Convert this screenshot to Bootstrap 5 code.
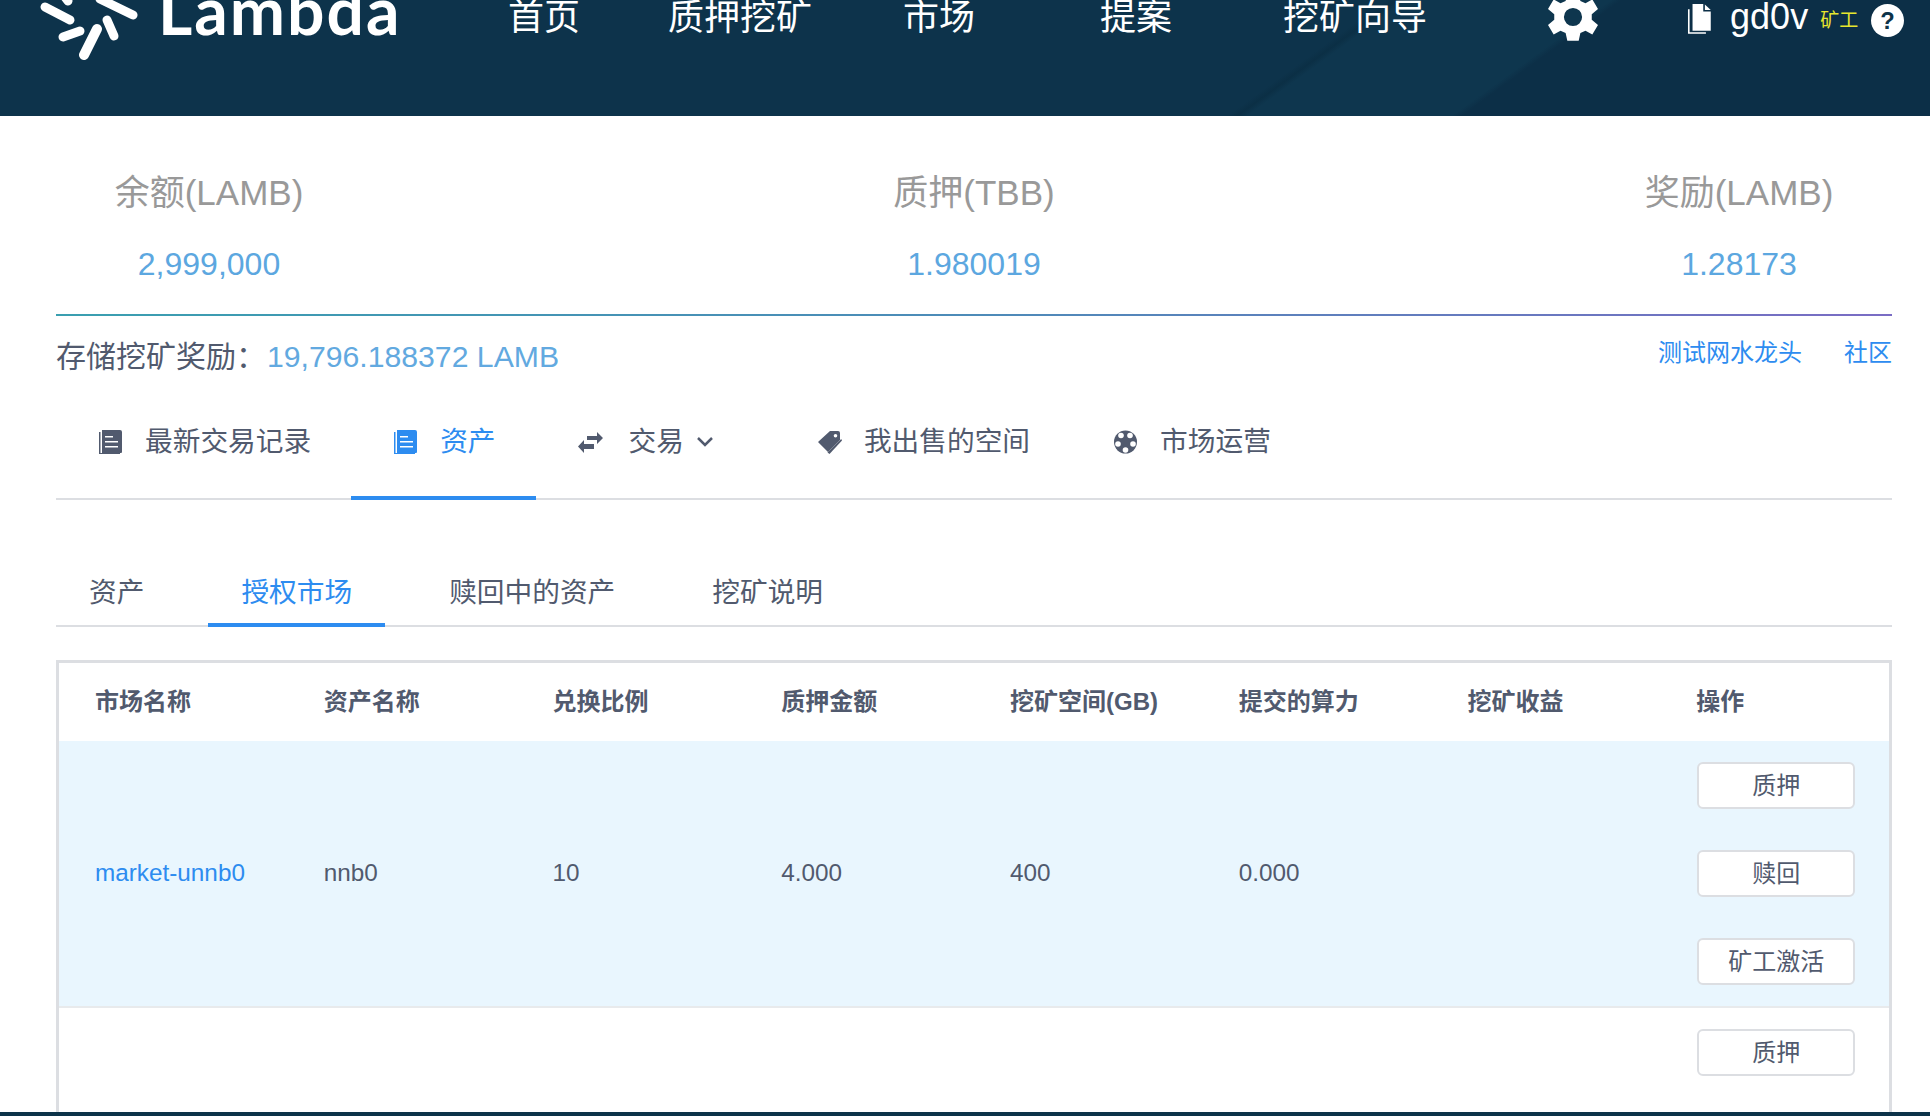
<!DOCTYPE html>
<html lang="zh-CN">

<head>
    <meta charset="UTF-8" />
    <title>Lambda</title>
    <link rel="stylesheet" href="https://cdn.jsdelivr.net/npm/bootstrap@5.3.3/dist/css/bootstrap.min.css">
    <script src="https://cdn.jsdelivr.net/npm/bootstrap@5.3.3/dist/js/bootstrap.bundle.min.js"></script>
    <style>
        html,
        body {
            height: 100%;
        }

        body {
            font-family: "Liberation Sans", "Noto Sans CJK SC", sans-serif;
            color: #515a6e;
            background-color: #fff;
            overflow: hidden;
        }

        a {
            text-decoration: none;
        }

        /* header */
        .top-head {
            flex: 0 0 116px;
            overflow: hidden;
            background-color: #0d334b;
            background-image: linear-gradient(144deg, #0d334b 0, #0d334b 815px, #0b2f45 821px, #0e364e 827px, #0e364e 947px, #0c2f47 953px);
        }

        .top-inner {
            height: 34px;
            color: #fff;
        }

        .logo-mark {
            flex: 0 0 auto;
            width: 158px;
            height: 60px;
            margin-top: 26px;
        }

        .logo-word {
            flex: 0 0 350px;
            font-family: Lato, sans-serif;
            font-weight: 700;
            font-size: 66px;
            line-height: 34px;
            letter-spacing: 2px;
            margin-top: -14px;
        }

        .main-nav {
            margin-top: 4px;
        }

        .main-nav a {
            color: #fff;
            font-size: 36px;
            line-height: 34px;
            white-space: nowrap;
        }

        .main-nav li:nth-child(2) { margin-left: 88px; }
        .main-nav li:nth-child(3) { margin-left: 91px; }
        .main-nav li:nth-child(4) { margin-left: 125px; }
        .main-nav li:nth-child(5) { margin-left: 111px; }

        .gear-icon {
            width: 50px;
            height: 48px;
            margin-left: 121px;
            flex: 0 0 auto;
        }

        .file-icon {
            width: 25px;
            height: 30px;
            margin-left: 89px;
            margin-top: 4px;
            flex: 0 0 auto;
        }

        .user-name {
            font-size: 36px;
            margin-left: 18px;
            line-height: 34px;
        }

        .user-role {
            color: #e6e62e;
            font-size: 19px;
            margin-left: 12px;
            margin-top: 8px;
            white-space: nowrap;
        }

        .help-icon {
            width: 33px;
            height: 33px;
            margin-left: 13px;
            margin-top: 7px;
            flex: 0 0 auto;
        }

        /* summary */
        .page-body {
            flex: 1 1 auto;
            min-height: 0;
            overflow: hidden;
            padding: 0 38px 0 56px;
        }

        .stat-row {
            padding: 52px 0 30px;
            border-bottom: 2px solid transparent;
            border-image: linear-gradient(90deg, #3a9fb0, #4d8bb8 50%, #7a6cc4) 1;
        }

        .stat-box {
            width: 306px;
        }

        .stat-name {
            font-size: 35px;
            line-height: 50px;
            color: #999;
        }

        .stat-num {
            font-size: 32px;
            line-height: 40px;
            margin-top: 26px;
            color: #5ca7e0;
        }

        .reward-row {
            margin-top: 16px;
            height: 50px;
        }

        .reward-text {
            font-size: 30px;
            line-height: 50px;
        }

        .reward-num {
            color: #62a9e0;
            font-size: 30.2px;
            margin-left: 1px;
        }

        .side-links {
            font-size: 24px;
            line-height: 42px;
            gap: 42px;
        }

        .side-links a {
            color: #2d8cf0;
        }

        /* main tabs */
        .main-tabs {
            margin-top: 18px;
            border-bottom: 2px solid #dcdee2;
            flex-wrap: nowrap;
        }

        .main-tabs .nav-link {
            display: flex;
            align-items: center;
            height: 100px;
            padding: 0 40px 13px 42px;
            margin-bottom: -2px;
            color: #515a6e;
            font-size: 27.7px;
            border-bottom: 4px solid transparent;
        }

        .main-tabs .nav-link.active {
            color: #2d8cf0;
            border-bottom-color: #2d8cf0;
        }

        .main-tabs .item-deal {
            margin-right: 21px;
        }

        .main-tabs .item-sale {
            margin-right: 1px;
        }

        .tab-icon {
            width: 25px;
            height: 24px;
            margin-right: 22px;
            flex: 0 0 auto;
            fill: currentColor;
        }

        .item-deal .tab-icon {
            margin-right: 26px;
        }

        .tab-caret {
            width: 18px;
            height: 11px;
            margin-left: 12px;
        }

        /* sub tabs */
        .sub-tabs {
            margin-top: 73px;
            border-bottom: 2px solid #dcdee2;
            gap: 31px;
        }

        .sub-tabs .nav-link {
            padding: 0 33px 10px;
            line-height: 40px;
            margin-bottom: -2px;
            color: #515a6e;
            font-size: 27.7px;
            border-bottom: 4px solid transparent;
        }

        .sub-tabs .nav-link.active {
            color: #2d8cf0;
            border-bottom-color: #2d8cf0;
        }

        /* table */
        .asset-wrap {
            margin-top: 33px;
            border: solid #dcdee2;
            border-width: 3px 3px 0;
        }

        .asset-table {
            table-layout: fixed;
            width: 100%;
            font-size: 24px;
            color: #515a6e;
        }

        .asset-table th {
            height: 78px;
            padding: 0 0 0 36px;
            font-weight: 700;
            background: #fff;
            white-space: nowrap;
        }

        .asset-table td {
            padding: 0 0 0 36px;
            font-size: 24.3px;
            vertical-align: middle;
            border-bottom: 2px solid #e8eaec;
        }

        .asset-table tr.row-on td {
            background-color: #e9f6fe;
        }

        .asset-table a {
            color: #2d8cf0;
        }

        .asset-table td.act-cell {
            padding: 21px 0 21px 37px;
        }

        .asset-table tr.row-tail td {
            height: 264px;
            vertical-align: top;
        }

        .act-btn {
            display: block;
            width: 158px;
            height: 47px;
            padding: 0;
            font-size: 24px;
            line-height: 43px;
            color: #515a6e;
            background: #fff;
            border: 2px solid #dcdee2;
            border-radius: 6px;
        }

        .act-btn+.act-btn {
            margin-top: 41px;
        }

        .foot-strip {
            flex: 0 0 4px;
            background-color: #0d3349;
        }
    </style>
</head>

<body>
    <div class="d-flex flex-column h-100">

        <!-- Header -->
        <header class="top-head">
            <div class="top-inner d-flex align-items-center">
                <svg class="logo-mark" viewBox="0 0 158 60" aria-hidden="true">
                    <g stroke="#fff" stroke-linecap="round" fill="none">
                        <line x1="45" y1="7" x2="70" y2="20" stroke-width="9" />
                        <line x1="58" y1="-12" x2="68" y2="1" stroke-width="9" />
                        <line x1="100" y1="-1" x2="133" y2="15" stroke-width="9" />
                        <line x1="63" y1="37" x2="80" y2="31" stroke-width="9" />
                        <line x1="84" y1="55" x2="97" y2="29" stroke-width="10" />
                        <line x1="107" y1="20" x2="114" y2="36" stroke-width="9" />
                    </g>
                </svg>
                <span class="logo-word">Lambda</span>
                <ul class="main-nav list-unstyled d-flex align-items-center mb-0">
                    <li><a href="#">首页</a></li>
                    <li><a href="#">质押挖矿</a></li>
                    <li><a href="#">市场</a></li>
                    <li><a href="#">提案</a></li>
                    <li><a href="#">挖矿向导</a></li>
                </ul>
                <svg class="gear-icon" viewBox="3 0 44 42" aria-hidden="true">
                    <path fill="#fff" fill-rule="evenodd"
                        d="M20 0h10l1.500 7 4.500 2 6-3.500 5 8.500-5.500 4.500v5l5.500 4.500-5 8.500-6-3.500-4.500 2-1.500 7h-10l-1.500-7-4.500-2-6 3.500-5-8.500 5.500-4.500v-5l-5.500-4.500 5-8.500 6 3.500 4.500-2z M25 13a8 8 0 1 0 0 16 8 8 0 1 0 0-16z" />
                </svg>
                <svg class="file-icon" viewBox="0 0 23 28" aria-hidden="true">
                    <path fill="#fff" d="M5 0h10v7h7v18H5z" />
                    <path fill="#fff" d="M16.500 0.500l5.500 5h-5.500z" />
                    <path fill="none" stroke="#fff" stroke-width="1.500" d="M1.500 5v22h16" />
                </svg>
                <span class="user-name">gd0v</span>
                <span class="user-role">矿工</span>
                <svg class="help-icon" viewBox="0 0 32 32" aria-hidden="true">
                    <circle cx="16" cy="16" r="16" fill="#fff" />
                    <text x="16" y="24" text-anchor="middle" fill="#0d3349" font-family="Liberation Sans" font-weight="700" font-size="23">?</text>
                </svg>
            </div>
        </header>

        <!-- Content -->
        <main class="page-body">
            <div class="stat-row d-flex justify-content-between text-center">
                <div class="stat-box">
                    <div class="stat-name">余额(LAMB)</div>
                    <div class="stat-num">2,999,000</div>
                </div>
                <div class="stat-box">
                    <div class="stat-name">质押(TBB)</div>
                    <div class="stat-num">1.980019</div>
                </div>
                <div class="stat-box">
                    <div class="stat-name">奖励(LAMB)</div>
                    <div class="stat-num">1.28173</div>
                </div>
            </div>

            <div class="reward-row d-flex justify-content-between">
                <div class="reward-text">存储挖矿奖励：<span class="reward-num">19,796.188372 LAMB</span></div>
                <div class="side-links d-flex">
                    <a href="#">测试网水龙头</a>
                    <a href="#">社区</a>
                </div>
            </div>

            <ul class="nav main-tabs">
                <li class="nav-item">
                    <a class="nav-link" href="#">
                        <svg class="tab-icon" viewBox="0 0 25 24" aria-hidden="true">
                            <path d="M1 2h1.500v21H22v1H1z" />
                            <path fill-rule="evenodd" d="M4 0h18a2 2 0 0 1 2 2v20a1 1 0 0 1-1 1H4z M7 6v1.500h8V6z M7 11v1.500h13V11z M7 16v1.500h13V16z" />
                        </svg>最新交易记录
                    </a>
                </li>
                <li class="nav-item">
                    <a class="nav-link active" href="#">
                        <svg class="tab-icon" viewBox="0 0 25 24" aria-hidden="true">
                            <path d="M1 2h1.500v21H22v1H1z" />
                            <path fill-rule="evenodd" d="M4 0h18a2 2 0 0 1 2 2v20a1 1 0 0 1-1 1H4z M7 6v1.500h8V6z M7 11v1.500h13V11z M7 16v1.500h13V16z" />
                        </svg>资产
                    </a>
                </li>
                <li class="nav-item item-deal">
                    <a class="nav-link" href="#">
                        <svg class="tab-icon" viewBox="0 0 25 24" aria-hidden="true">
                            <path d="M9 6h10V2l6 6-6 6v-4H9z" />
                            <path d="M16 14H6v-4l-6 6.500 6 6.500v-4h10z" />
                        </svg>交易
                        <svg class="tab-caret" viewBox="0 0 18 11" aria-hidden="true">
                            <path d="M2 2l7 7 7-7" fill="none" stroke="currentColor" stroke-width="2.500" />
                        </svg>
                    </a>
                </li>
                <li class="nav-item item-sale">
                    <a class="nav-link" href="#">
                        <svg class="tab-icon" viewBox="0 0 25 24" aria-hidden="true">
                            <path fill-rule="evenodd" d="M13 1h8a2 2 0 0 1 2 2v7L11 22 1 12z M18.500 4a1.800 1.800 0 1 0 0 3.600 1.800 1.800 0 1 0 0-3.600z" />
                            <path d="M24.200 9l.8 1.500L12.500 24l-2-1.500z" />
                        </svg>我出售的空间
                    </a>
                </li>
                <li class="nav-item">
                    <a class="nav-link" href="#">
                        <svg class="tab-icon" viewBox="0 0 24 24" aria-hidden="true">
                            <circle cx="12" cy="12" r="11.500" />
                            <g fill="#fff">
                                <circle cx="7.500" cy="5.500" r="2.800" />
                                <circle cx="16.500" cy="5.500" r="2.800" />
                                <circle cx="4.500" cy="14" r="2.800" />
                                <circle cx="19.500" cy="14" r="2.800" />
                                <circle cx="12" cy="20" r="2.800" />
                            </g>
                        </svg>市场运营
                    </a>
                </li>
            </ul>

            <ul class="nav sub-tabs">
                <li class="nav-item"><a class="nav-link" href="#">资产</a></li>
                <li class="nav-item"><a class="nav-link active" href="#">授权市场</a></li>
                <li class="nav-item"><a class="nav-link" href="#">赎回中的资产</a></li>
                <li class="nav-item"><a class="nav-link" href="#">挖矿说明</a></li>
            </ul>

            <div class="asset-wrap">
                <table class="asset-table">
                    <thead>
                        <tr>
                            <th>市场名称</th>
                            <th>资产名称</th>
                            <th>兑换比例</th>
                            <th>质押金额</th>
                            <th>挖矿空间(GB)</th>
                            <th>提交的算力</th>
                            <th>挖矿收益</th>
                            <th>操作</th>
                        </tr>
                    </thead>
                    <tbody>
                        <tr class="row-on">
                            <td><a href="#">market-unnb0</a></td>
                            <td>nnb0</td>
                            <td>10</td>
                            <td>4.000</td>
                            <td>400</td>
                            <td>0.000</td>
                            <td></td>
                            <td class="act-cell">
                                <button class="act-btn" type="button">质押</button>
                                <button class="act-btn" type="button">赎回</button>
                                <button class="act-btn" type="button">矿工激活</button>
                            </td>
                        </tr>
                        <tr class="row-tail">
                            <td colspan="7"></td>
                            <td class="act-cell">
                                <button class="act-btn" type="button">质押</button>
                            </td>
                        </tr>
                    </tbody>
                </table>
            </div>
        </main>

        <div class="foot-strip"></div>
    </div>
</body>

</html>
